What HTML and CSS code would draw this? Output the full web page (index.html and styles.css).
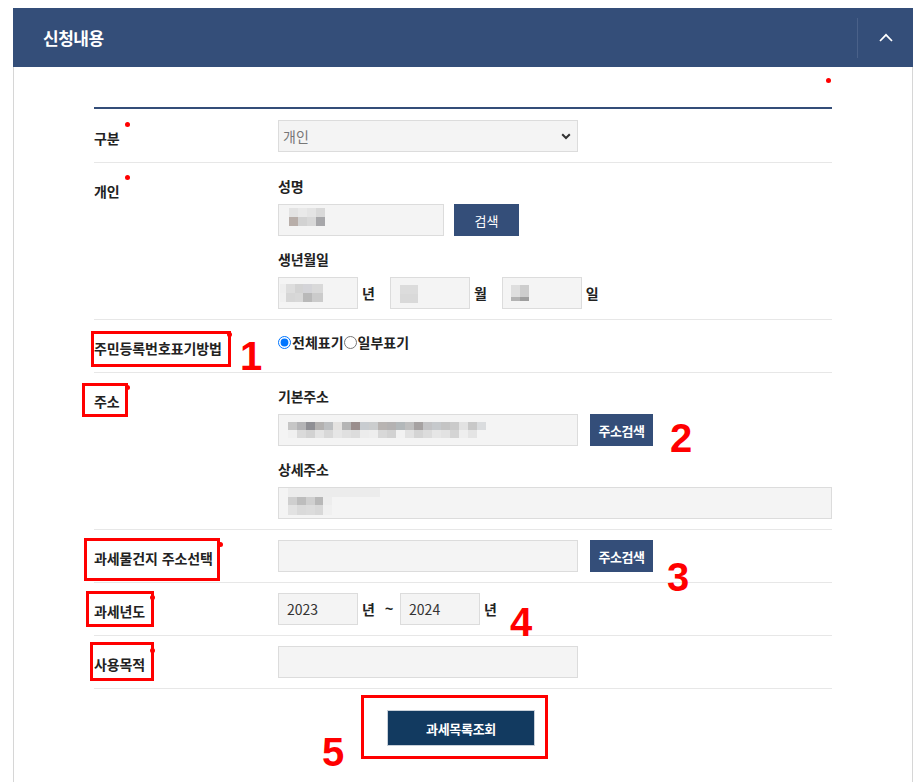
FILE: index.html
```html
<!DOCTYPE html>
<html lang="ko">
<head>
    <meta charset="UTF-8">
    <meta name="viewport" content="width=device-width, initial-scale=1.0">
    <title>신청내용</title>
    <link rel="stylesheet" href="styles.css">
</head>
<body>
    <div class="panel">
        <div class="panel-head">
            <h2 class="panel-title">신청내용</h2>
            <button class="toggle" type="button" aria-label="접기">
                <svg width="14" height="9" viewBox="0 0 14 9"><polyline points="1,8 7,1.8 13,8" fill="none" stroke="#fff" stroke-width="1.7"/></svg>
            </button>
        </div>

        <div class="panel-body">
            <div class="req-note"><span class="req-dot"></span></div>

            <div class="form-table">
                <div class="row">
                    <div class="th"><span class="req">구분</span></div>
                    <div class="td">
                        <div class="select-wrap">
                            <select class="sel">
                                <option>개인</option>
                                <option>법인</option>
                            </select>
                            <svg class="sel-arrow" width="10" height="7" viewBox="0 0 10 7"><polyline points="1.2,1.2 5,5 8.8,1.2" fill="none" stroke="#333" stroke-width="2"/></svg>
                        </div>
                    </div>
                </div>

                <div class="row">
                    <div class="th"><span class="req">개인</span></div>
                    <div class="td stack">
                        <div class="sub">성명</div>
                        <div class="line">
                            <div class="inp w-name top-3"><span class="mz mz-name"></span></div>
                            <button class="btn-sm btn-search" type="button">검색</button>
                        </div>
                        <div class="sub">생년월일</div>
                        <div class="line">
                            <div class="inp w-date pad-1"><span class="mz mz-year"></span></div>
                            <span class="unit">년</span>
                            <div class="inp w-date pad-9"><span class="mz mz-month"></span></div>
                            <span class="unit">월</span>
                            <div class="inp w-date pad-8"><span class="mz mz-day"></span></div>
                            <span class="unit">일</span>
                        </div>
                    </div>
                </div>

                <div class="row">
                    <div class="th"><span class="req">주민등록번호표기방법</span></div>
                    <div class="td">
                        <div class="radios">
                            <label class="radio"><input type="radio" name="rrn" checked>전체표기</label>
                            <label class="radio"><input type="radio" name="rrn">일부표기</label>
                        </div>
                    </div>
                </div>

                <div class="row">
                    <div class="th"><span class="req">주소</span></div>
                    <div class="td stack">
                        <div class="sub">기본주소</div>
                        <div class="line">
                            <div class="inp w-addr pad-9"><span class="mz mz-addr"></span></div>
                            <button class="btn-sm btn-addr" type="button">주소검색</button>
                        </div>
                        <div class="sub">상세주소</div>
                        <div class="line">
                            <div class="inp w-full top-0"><span class="mz mz-detail"></span></div>
                        </div>
                    </div>
                </div>

                <div class="row">
                    <div class="th"><span class="req">과세물건지 주소선택</span></div>
                    <div class="td">
                        <div class="line">
                            <input class="inp w-addr" type="text">
                            <button class="btn-sm btn-addr" type="button">주소검색</button>
                        </div>
                    </div>
                </div>

                <div class="row">
                    <div class="th"><span class="req">과세년도</span></div>
                    <div class="td">
                        <div class="line">
                            <input class="inp w-date" type="text" value="2023">
                            <span class="unit unit-tight">년</span>
                            <span class="tilde">~</span>
                            <input class="inp w-date" type="text" value="2024">
                            <span class="unit">년</span>
                        </div>
                    </div>
                </div>

                <div class="row">
                    <div class="th"><span class="req">사용목적</span></div>
                    <div class="td">
                        <input class="inp w-addr" type="text">
                    </div>
                </div>
            </div>

            <div class="btn-area">
                <button class="btn-submit" type="button">과세목록조회</button>
            </div>
        </div>
    </div>

    <!-- 안내용 표시 -->
    <div class="annot">
        <div class="hl hl-1"></div>
        <div class="hl hl-2"></div>
        <div class="hl hl-3"></div>
        <div class="hl hl-4"></div>
        <div class="hl hl-5"></div>
        <div class="hl hl-6"></div>
        <span class="num num-1">1</span>
        <span class="num num-2">2</span>
        <span class="num num-3">3</span>
        <span class="num num-4">4</span>
        <span class="num num-5">5</span>
    </div>
</body>
</html>
```

FILE: styles.css
```css
body {
    margin: 0;
    font-family: "Noto Sans CJK KR", "Noto Sans", sans-serif;
    color: #222;
    background-color: #fff;
    position: relative;
}
.panel {
    width: 900px;
    margin: 8px 0 0 13px;
}
.panel-head {
    height: 59px;
    background-color: #344e79;
    display: flex;
    align-items: center;
    justify-content: space-between;
}
.panel-title {
    margin: 0;
    padding-left: 30px;
    color: #fff;
    font-size: 17px;
    font-weight: 700;
    letter-spacing: -0.5px;
}
.toggle {
    width: 56px;
    height: 40px;
    padding: 0;
    border: 0;
    border-left: 1px solid #4a6189;
    background: none;
    display: flex;
    align-items: center;
    justify-content: center;
}
.panel-body {
    border: 1px solid #d6d6d6;
    border-top: 0;
    padding: 0 80px 60px;
    min-height: 700px;
}
.req-note {
    height: 40px;
    box-sizing: border-box;
    padding-top: 11px;
    display: flex;
    justify-content: flex-end;
}
.req-dot {
    width: 5px;
    height: 5px;
    margin-right: 1px;
    border-radius: 50%;
    background-color: #f00;
}
.form-table {
    border-top: 2px solid #344e79;
}
.row {
    display: grid;
    grid-template-columns: 184px 1fr;
    padding: 10px 0;
    border-bottom: 1px solid #e7e7e7;
}
.row:first-child {
    padding-top: 11px;
}
.th {
    box-sizing: border-box;
    min-height: 32px;
    padding-top: 7px;
    line-height: 22px;
    font-size: 14px;
    font-weight: 700;
    letter-spacing: -0.1px;
}
.req {
    position: relative;
}
.req::after {
    content: "";
    position: absolute;
    top: -6px;
    right: -10px;
    width: 5px;
    height: 5px;
    border-radius: 50%;
    background-color: #f00;
}
.stack {
    padding-top: 2px;
}
.sub {
    line-height: 22px;
    font-size: 14px;
    font-weight: 700;
    letter-spacing: -0.2px;
    margin-bottom: 7px;
}
.sub ~ .sub {
    margin-top: 12px;
}
.line {
    display: flex;
    align-items: center;
}
.inp {
    box-sizing: border-box;
    height: 32px;
    margin: 0;
    padding: 0 8px;
    border: 1px solid #dcdcdc;
    background-color: #f4f4f4;
    font-family: inherit;
    font-size: 14px;
    color: #333;
    display: flex;
    align-items: center;
}
input.inp {
    display: block;
    outline: none;
}
.w-name { width: 166px; }
.w-date { width: 80px; }
.w-addr { width: 300px; }
.w-full { width: 100%; }
.pad-1 { padding-left: 1px; }
.pad-8 { padding-left: 8px; }
.pad-9 { padding-left: 9px; }
.top-3 {
    align-items: flex-start;
    padding: 3px 10px 0;
}
.top-0 {
    align-items: flex-start;
    padding: 0 9px;
}
.unit {
    font-size: 14px;
    font-weight: 700;
    margin: 0 15px 0 4px;
}
.unit:last-child {
    margin-right: 0;
}
.unit-tight {
    margin-right: 0;
}
.tilde {
    font-family: "Liberation Sans", Arial, sans-serif;
    font-size: 14px;
    font-weight: 700;
    margin: 0 7px 0 10px;
}
.btn-sm {
    height: 32px;
    padding: 0;
    border: 0;
    background-color: #344e79;
    color: #fff;
    font-family: inherit;
    font-size: 13px;
    cursor: pointer;
}
.btn-search {
    width: 65px;
    margin-left: 10px;
}
.btn-addr {
    width: 63px;
    margin-left: 12px;
    font-weight: 700;
    letter-spacing: -0.5px;
}
.select-wrap {
    position: relative;
    width: 300px;
}
.sel {
    appearance: none;
    -webkit-appearance: none;
    box-sizing: border-box;
    display: block;
    width: 300px;
    height: 32px;
    padding: 0 4px;
    border: 1px solid #dcdcdc;
    border-radius: 0;
    background-color: #f4f4f4;
    font-family: inherit;
    font-size: 14px;
    color: #777;
    outline: none;
}
.sel-arrow {
    position: absolute;
    top: 13px;
    right: 7px;
}
.radios {
    display: flex;
    align-items: center;
    line-height: 22px;
    padding-top: 1px;
}
.radio {
    display: flex;
    align-items: center;
    font-size: 14px;
    font-weight: 700;
}
.radio input {
    width: 13px;
    height: 13px;
    margin: 0 1px 0 0;
}

/* 가려진 개인정보 */
.mz {
    display: block;
    flex-shrink: 0;
}
.mz-name {
    width: 36px;
    height: 18px;
    background:
        linear-gradient(90deg, #e3e3e3 0 9px, #e9e9e9 9px 18px, #e4e4e4 18px 27px, #d9d9d9 27px) top / 100% 9px no-repeat,
        linear-gradient(90deg, #b8aea9 0 9px, #d2d2d2 9px 18px, #d8d8d8 18px 27px, #a7a7aa 27px) bottom / 100% 9px no-repeat;
}
.mz-year {
    width: 43px;
    height: 18px;
    background:
        linear-gradient(90deg, #eeeeee 0 6px, #dddddd 6px 15px, #d3d3d3 15px 23px, #d4d4d8 23px 32px, #d9d9d9 32px) top / 100% 9px no-repeat,
        linear-gradient(90deg, #f0f0f0 0 6px, #d6d6d6 6px 15px, #d8d8d8 15px 23px, #b9b9b9 23px 32px, #cbcbcb 32px) bottom / 100% 9px no-repeat;
}
.mz-month {
    width: 18px;
    height: 18px;
    margin-top: 2px;
    background:
        linear-gradient(#dcdcdc 0 9px, #d9d9d9 9px);
}
.mz-day {
    width: 18px;
    height: 16px;
    background:
        linear-gradient(90deg, #dedede 0 9px, #cdcdcd 9px) top / 100% 12px no-repeat,
        linear-gradient(90deg, #b3b3b3 0 9px, #9e9e9e 9px) bottom / 100% 4px no-repeat;
}
.mz-addr {
    width: 216px;
    height: 16px;
    background:
        linear-gradient(90deg,
            #c6c6c6 0 9px, #b4b4b6 9px 18px, #8f8f94 18px 27px, #b3b1b0 27px 36px,
            #bdbfc1 36px 45px, #e4e2e0 45px 54px, #b5b5b5 54px 63px, #9a8e8d 63px 72px,
            #c8ccd0 72px 81px, #cbcdce 81px 90px, #b8b4b2 90px 99px, #b4b2b2 99px 108px,
            #b3b8ba 108px 117px, #bfbfbf 117px 126px, #a6a2a2 126px 135px, #c3c3c5 135px 144px,
            #c6c9cc 144px 153px, #c4c4c4 153px 162px, #cacaca 162px 171px, #e2e2e2 171px 180px,
            #c8c8c8 180px 189px, #dadcde 189px 198px, #f4f4f4 198px) top / 100% 8px no-repeat,
        linear-gradient(90deg,
            #f0f0f0 0 9px, #dadada 9px 18px, #d2d2d2 18px 27px, #e4e4e4 27px 36px,
            #d8d8d8 36px 45px, #e6e6e6 45px 54px, #e0e0e0 54px 63px, #dcdcdc 63px 72px,
            #ececec 72px 81px, #eeeeee 81px 90px, #d8d8d8 90px 99px, #d2d2d2 99px 108px,
            #f2f2f2 108px 117px, #e2e2e2 117px 126px, #d4d4d4 126px 135px, #dcdcdc 135px 144px,
            #e6e6e6 144px 153px, #e2e2e2 153px 162px, #d4d4d4 162px 171px, #eeeeee 171px 180px,
            #e4e4e4 180px 189px, #f4f4f4 189px) bottom / 100% 8px no-repeat;
}
.mz-detail {
    width: 92px;
    height: 27px;
    background:
        linear-gradient(90deg, #ececec 0 92px) top / 100% 9px no-repeat,
        linear-gradient(90deg, #cfcfcf 0 9px, #bdbdbd 9px 18px, #cfcfcf 18px 27px, #b8b8b8 27px 35px, #ededed 35px 44px, #f4f4f4 44px) 0 9px / 100% 8px no-repeat,
        linear-gradient(90deg, #e2e2e2 0 9px, #dadada 9px 18px, #dcdcdc 18px 27px, #d8d8d8 27px 35px, #f0f0f0 35px 44px, #f4f4f4 44px) 0 17px / 100% 10px no-repeat;
}

.btn-area {
    padding-top: 21px;
    text-align: center;
}
.btn-submit {
    width: 148px;
    height: 36px;
    margin-right: 4px;
    border: 1px solid #c8d0d9;
    background-color: #123a60;
    color: #fff;
    font-family: inherit;
    font-size: 13px;
    font-weight: 700;
    letter-spacing: -0.3px;
    cursor: pointer;
}

/* 빨간 표시 */
.annot {
    position: absolute;
    top: 0;
    left: 0;
}
.hl {
    position: absolute;
    box-sizing: border-box;
    border: 3px solid #f00;
}
.hl-1 { left: 91px; top: 331px; width: 140px; height: 36px; }
.hl-2 { left: 82px; top: 383px; width: 46px; height: 34px; }
.hl-3 { left: 84px; top: 538px; width: 136px; height: 43px; }
.hl-4 { left: 86px; top: 591px; width: 68px; height: 36px; }
.hl-5 { left: 90px; top: 642px; width: 64px; height: 39px; }
.hl-6 { left: 361px; top: 695px; width: 187px; height: 64px; }
.num {
    position: absolute;
    font-family: "Liberation Sans", Arial, sans-serif;
    font-size: 40px;
    font-weight: 700;
    line-height: 1;
    color: #f00;
}
.num-1 { left: 240px; top: 336px; }
.num-2 { left: 670px; top: 418px; }
.num-3 { left: 667px; top: 557px; }
.num-4 { left: 510px; top: 602px; }
.num-5 { left: 322px; top: 732px; }
```
